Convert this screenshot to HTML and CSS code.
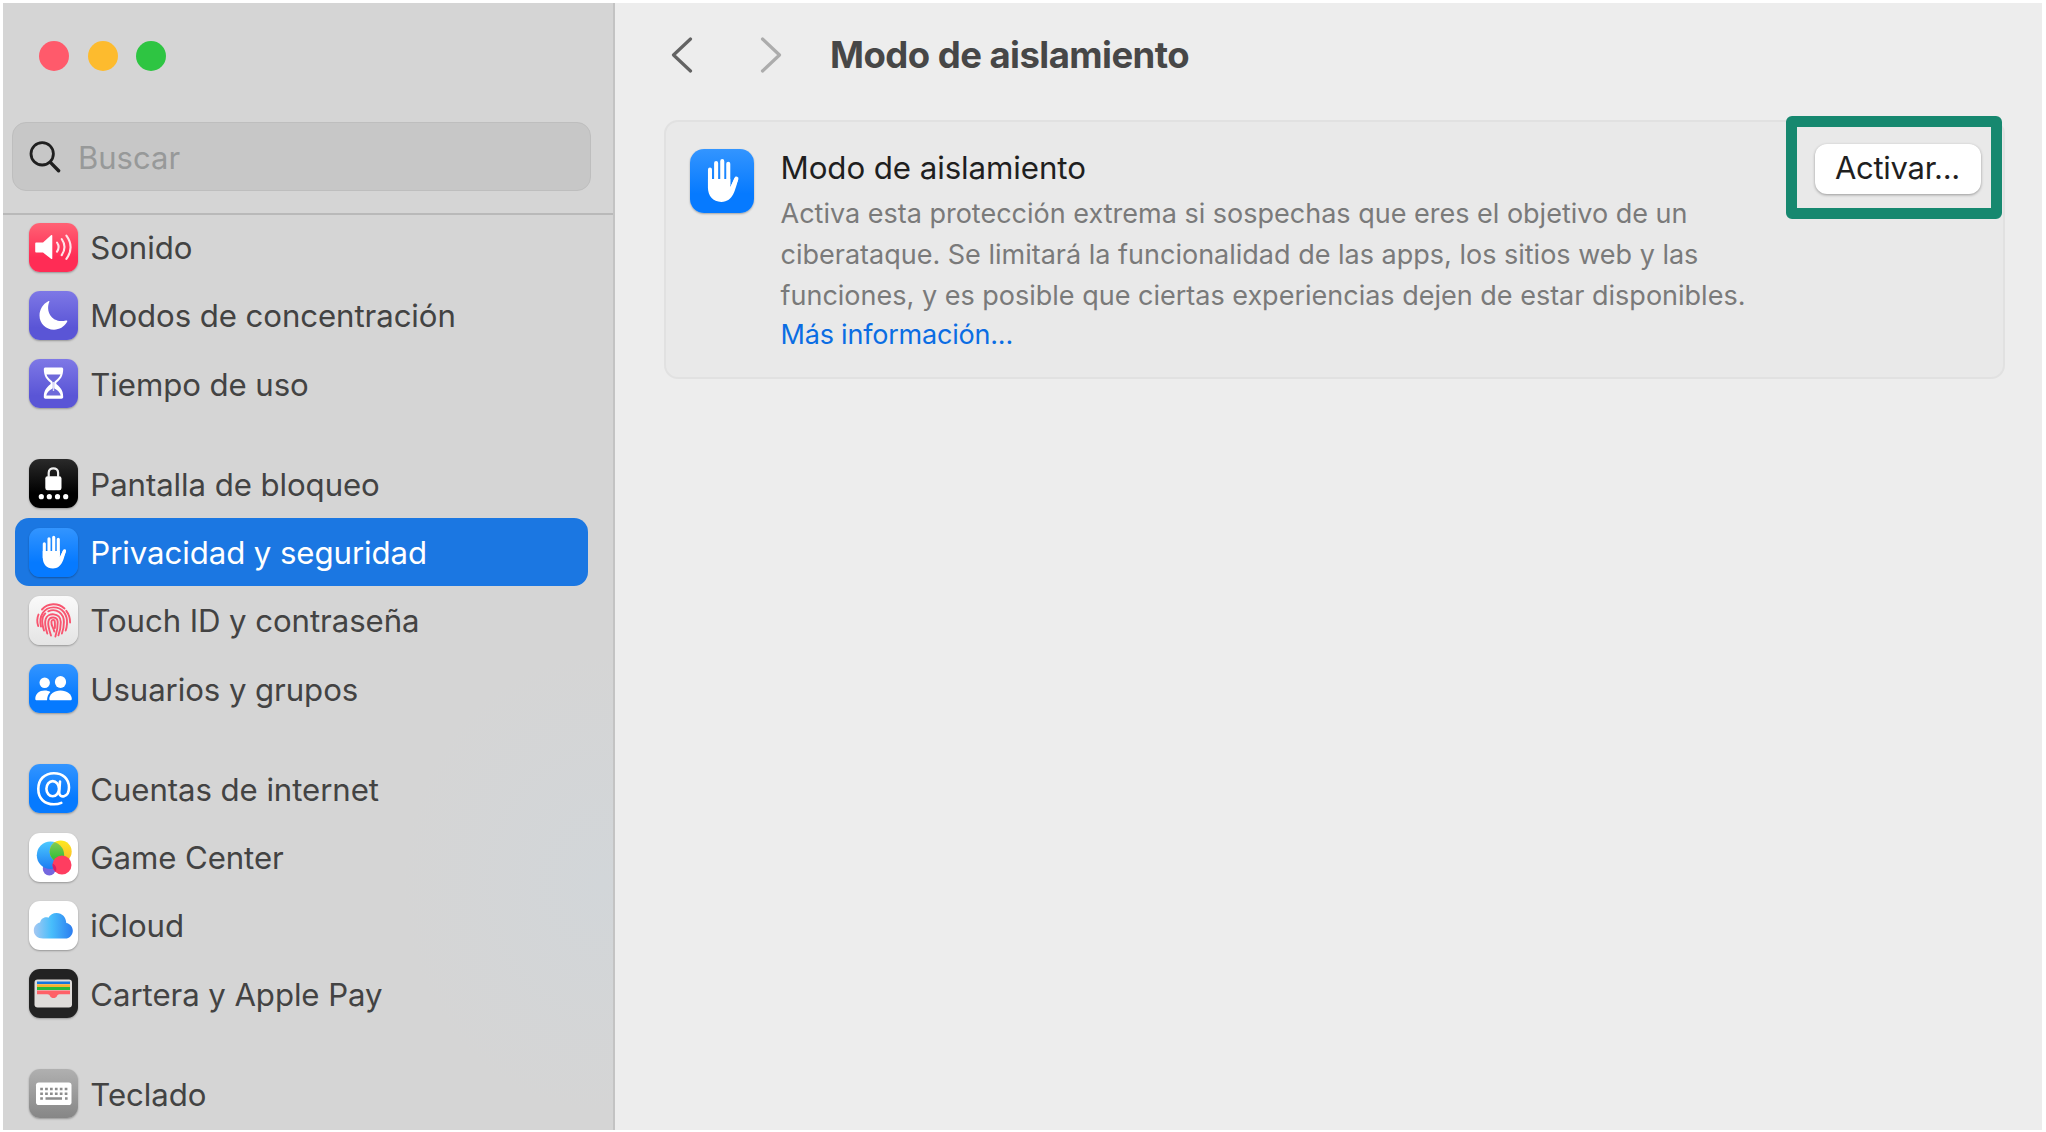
FILE: index.html
```html
<!DOCTYPE html>
<html lang="es">
<head>
<meta charset="utf-8">
<title>Modo de aislamiento</title>
<link rel="stylesheet" href="styles.css">
</head>
<body>
<svg class="defs" width="0" height="0" aria-hidden="true">
  <defs>
    <symbol id="hand" viewBox="0 0 49 49">
      <g fill="none" stroke="#fff" stroke-width="3.1" stroke-linecap="round">
        <path d="M15.300 15.800v14M20 10.800v16M24.700 9.300v17M29.300 11.300v16"/>
        <path d="M35.500 22.800l-3.400 8" stroke-width="3.200"/>
      </g>
      <path fill="#fff" d="M13.750 23H30.850V29L34.100 22.200 36.900 23.600C34.500 30.500 33.500 40.500 24 40.500 17.500 40.500 13.750 36 13.750 29.500Z"/>
    </symbol>
  </defs>
</svg>
<div class="window">
  <aside class="sidebar">
    <header class="sidebar-head">
      <div class="lights"><i class="light red"></i><i class="light amber"></i><i class="light green"></i></div>
      <div class="search">
        <svg width="32" height="32" viewBox="0 0 32 32" fill="none" stroke="#1f1f1f" stroke-width="2.800" stroke-linecap="round"><circle cx="13.200" cy="12.800" r="11.200"/><path d="M21.400 21.400L29.600 29.800" stroke-width="3.400"/></svg>
        <span>Buscar</span>
      </div>
    </header>
    <nav class="list">
      <div class="group">
        <div class="row"><svg class="icon sound" viewBox="0 0 49 49"><path fill="#fff" d="M7.500 19.500h6.500l8-7.300c.8-.6 1.300-.3 1.300.6v22.400c0 .9-.5 1.200-1.300.6l-8-6.300H7.500c-.9 0-1.300-.5-1.300-1.300v-7.400c0-.8.400-1.300 1.300-1.300z"/><g fill="none" stroke="#ffe3e8" stroke-width="2.100" stroke-linecap="round"><path d="M28 19.500q3.200 4.500 0 9.200M32.700 16q5.600 8 0 16.200M37.400 12.700q8.400 11.500 0 23.200"/></g></svg><span>Sonido</span></div>
        <div class="row"><svg class="icon violet" viewBox="0 0 49 49"><path fill="#fff" d="M20.300 10.800C16 21.500 24 32.700 36.800 29.600c1.400-.4 1.900.2 1.200 1.500C35 36 30.500 38.700 25 38.700 16.800 38.700 10.500 32.500 10.500 24.500c0-6 3.300-11.500 8.700-14.300.9-.5 1.500-.2 1.100.6z"/></svg><span>Modos de concentración</span></div>
        <div class="row"><svg class="icon violet" viewBox="0 0 49 49"><path fill="#fff" d="M16.500 8.500h16c1 0 1.700.6 1.700 1.500 0 7.500-3 10.500-6.300 13.300-.9.800-.9 1.500 0 2.300 3.300 2.800 6.300 5.900 6.300 12.400 0 1-.7 1.700-1.700 1.700h-16c-1 0-1.700-.7-1.700-1.700 0-6.500 3-9.600 6.300-12.400.9-.8.900-1.500 0-2.300C17.800 20.500 14.800 17.500 14.800 10c0-.9.700-1.500 1.700-1.500z"/><path fill="#6e69da" d="M17.500 15.500h14c-.9 2.500-2.500 4.300-5 6.200-1 .8-1.300 1.700-1.300 2.800v4c0 .8.400 1.200 1.100 1.600 2.800 1.600 4.800 3.500 5.400 6.400H17.300c.6-2.900 2.600-4.800 5.400-6.400.7-.4 1.100-.8 1.100-1.600v-4c0-1.100-.3-2-1.300-2.800-2.500-1.900-4.100-3.700-5-6.200z"/><path fill="#fff" d="M23.800 23h1.400v9h-1.400z" opacity=".75"/></svg><span>Tiempo de uso</span></div>
      </div>
      <div class="group">
        <div class="row"><svg class="icon black" viewBox="0 0 49 49"><rect x="16.300" y="17.300" width="16.200" height="14" rx="2.200" fill="#fff"/><path d="M19.700 18v-4.200c0-6 9.400-6 9.400 0V18" fill="none" stroke="#eee" stroke-width="2.200"/><g fill="#fff"><circle cx="12.300" cy="37.700" r="2.600"/><circle cx="20.300" cy="37.700" r="2.600"/><circle cx="28.500" cy="37.700" r="2.600"/><circle cx="36.700" cy="37.700" r="2.600"/></g></svg><span>Pantalla de bloqueo</span></div>
        <div class="row selected"><svg class="icon blue" viewBox="0 0 49 49"><use href="#hand"/></svg><span>Privacidad y seguridad</span></div>
        <div class="row"><svg class="icon paper" viewBox="0 0 49 49"><g fill="none" stroke="#f8556f" stroke-width="1.900" stroke-linecap="round"><path d="M13 13.500C19 6.800 29 6.600 35.500 12.500M37.300 14.800c2.500 3.200 3.800 7 3.800 11.700M9.500 18.500C8 22 7.800 26 9.200 30"/><path d="M12 30.500C9.500 20 15 11.500 24.500 11.400 33.500 11.400 38.700 18.500 38 28c-.2 2.800-.6 4.800-1.300 6.500"/><path d="M15 34.500C12.800 27 12 21.500 16.300 17.400M19.300 15.300C27 11.700 35 17 34.900 26c0 4-.6 8-2 11.500"/><path d="M18.300 37.500C16.500 32 15.300 27.500 16.600 23.200 18.500 16.300 31.700 16.200 31.800 26c0 4.500-.7 9-2.400 13.300"/><path d="M22 39.500C20.200 34 18.600 29.700 19.400 25.400 20.300 19.900 28.500 20.200 28.700 26c.1 4.800-.6 9.500-2.300 14.500"/><path d="M25.300 35.500C24.600 32 22 29.500 22.400 25.800c.3-2.700 3.300-2.500 3.400.2.100 2.300.3 4 .1 6"/></g></svg><span>Touch ID y contraseña</span></div>
        <div class="row"><svg class="icon blue" viewBox="0 0 49 49"><g fill="#fff"><circle cx="15.700" cy="18.700" r="5.200"/><path d="M6.300 34.800C6.300 30 10.200 26.500 15.700 26.500c2.300 0 4.200.5 5.700 1.500-2.300 2.200-3.300 5-3.300 8.300H7.800c-1 0-1.500-.5-1.500-1.500z"/><ellipse cx="31.500" cy="18" rx="5.600" ry="6"/><path d="M20.300 34.800C20.300 30.500 25 26.500 31.500 26.500S42.800 30.500 42.800 34.800c0 1-.5 1.500-1.500 1.500H21.800c-1 0-1.500-.5-1.500-1.500z"/></g></svg><span>Usuarios y grupos</span></div>
      </div>
      <div class="group">
        <div class="row"><svg class="icon blue" viewBox="0 0 49 49"><g fill="none" stroke="#fff" stroke-width="2.600" stroke-linecap="round"><ellipse cx="23.700" cy="24.700" rx="6.300" ry="7.600"/><path d="M31 17.500L30.200 28.500C30 34.500 40 34 40 23.500 40 14.500 33.500 9.200 25 9.200 15.500 9.200 9.300 15.500 9.300 25c0 9.500 6.200 15.300 15.700 15.300 2.600 0 5-.4 7.300-1.400"/></g></svg><span>Cuentas de internet</span></div>
        <div class="row"><svg class="icon white" viewBox="0 0 49 49"><defs><linearGradient id="gb" x2="0" y2="1"><stop stop-color="#4cc9ff"/><stop offset="1" stop-color="#1c7cf2"/></linearGradient><linearGradient id="gy" x2="0" y2="1"><stop stop-color="#fdea20"/><stop offset="1" stop-color="#fcb52c"/></linearGradient><linearGradient id="gg" x2="0" y2="1"><stop stop-color="#8bcb57"/><stop offset="1" stop-color="#22bd34"/></linearGradient><clipPath id="cb"><circle cx="21.500" cy="22.300" r="13.700"/></clipPath></defs><circle cx="20.300" cy="36" r="6.500" fill="#7467de"/><circle cx="21.500" cy="22.300" r="13.700" fill="url(#gb)"/><circle cx="31.700" cy="18.500" r="11" fill="url(#gy)"/><circle cx="31.700" cy="18.500" r="11" fill="url(#gg)" clip-path="url(#cb)"/><circle cx="33" cy="32" r="9.500" fill="#ff3d60"/><path d="M23.600 31.500a9.500 9.500 0 0 0 3.300 7.500 6.500 6.500 0 0 0-3.300-8.500z" fill="#d61e68"/></svg><span>Game Center</span></div>
        <div class="row"><svg class="icon white" viewBox="0 0 49 49"><defs><linearGradient id="cl"><stop stop-color="#a6c8f2"/><stop offset=".45" stop-color="#48befb"/><stop offset="1" stop-color="#2c7df0"/></linearGradient></defs><path fill="url(#cl)" d="M14 37.500C8.500 37.500 4.800 34 4.800 29.500c0-4.200 2.600-7.400 6.300-8 .6-3.500 4.400-6.300 8.300-4.700C21.200 13.700 24 12 27.500 12c5.700 0 9.500 4.200 9.800 10 3.700.7 6.500 3.700 6.500 7.700 0 4.300-3.300 7.800-7.500 7.800z"/></svg><span>iCloud</span></div>
        <div class="row"><svg class="icon wallet" viewBox="0 0 49 49"><rect x="5.500" y="10.500" width="37.500" height="28" rx="3.200" fill="#dfdcda"/><path fill="#1476dc" d="M8 12.500h33v2.400H8z"/><path fill="#f8b12c" d="M8 15.300h33v2.800H8z"/><path fill="#27b83b" d="M8 18.100h33v3H8z"/><path fill="#ff6167" d="M8 21.500h33v3.700H30.500c-1.500 0-2 .7-2.500 1.800-1.300 2.700-5.700 2.700-7 0-.5-1.100-1-1.800-2.500-1.800H8z"/></svg><span>Cartera y Apple Pay</span></div>
      </div>
      <div class="group">
        <div class="row"><svg class="icon gray" viewBox="0 0 49 49"><rect x="7" y="13.500" width="35.500" height="22.500" rx="2.800" fill="#fff"/><g stroke="#8c8c8c" stroke-width="2.600" fill="none"><path d="M11.200 20h27.500M11.200 24.800h27.500" stroke-dasharray="2.700 2.200"/><path d="M11.200 29.500h2.700M16.500 29.500h16.500M36 29.500h2.600"/></g></svg><span>Teclado</span></div>
      </div>
    </nav>
  </aside>
  <main class="main">
    <header class="toolbar">
      <svg class="chev back" width="22" height="36" viewBox="0 0 22 36"><path d="M19.500 2L2.500 18l17 16"/></svg>
      <svg class="chev next" width="22" height="36" viewBox="0 0 22 36"><path d="M2.500 2l17 16L2.500 34"/></svg>
      <h1>Modo de aislamiento</h1>
    </header>
    <section class="card">
      <svg class="icon big blue" viewBox="0 0 49 49"><use href="#hand"/></svg>
      <div class="copy">
        <h2>Modo de aislamiento</h2>
        <p>Activa esta protección extrema si sospechas que eres el objetivo de un<br>ciberataque. Se limitará la funcionalidad de las apps, los sitios web y las<br>funciones, y es posible que ciertas experiencias dejen de estar disponibles.</p>
        <a>Más información...</a>
      </div>
      <div class="highlight"><button>Activar...</button></div>
    </section>
  </main>
</div>
</body>
</html>
```
FILE: styles.css
```css
* { box-sizing: border-box; }
body { margin: 0; width: 2046px; height: 1132px; padding: 3px 4px 2px 3px; overflow: hidden; background: #fff; font-family: Inter, "Liberation Sans", sans-serif; }
.defs { display: block; position: absolute; }
.window { display: flex; width: 2039px; height: 1127px; overflow: hidden; background: #ededed; }
.sidebar { flex: none; width: 612px; border-right: 2px solid #c3c3c3; background: radial-gradient(ellipse 200px 230px at 600px 880px, #d2d6d9 0%, #d5d5d5 100%); }
.sidebar-head { height: 212px; padding: 38px 22px 0 9px; border-bottom: 2px solid #b9b9b9; }
.lights { display: flex; gap: 18.700px; padding-left: 27px; height: 81px; }
.light { width: 30px; height: 30px; border-radius: 50%; }
.red { background: #ff5a6b; }
.amber { background: #fdbb2e; }
.green { background: #2ec542; }
.search { display: flex; align-items: center; gap: 17.500px; height: 69px; padding-left: 15.500px; border: 1px solid #bebebe; border-radius: 14px; background: #c7c7c7; color: #979999; font-size: 31px; }
.search span { padding-top: 2px; }
.list { margin-top: -2px; color: #434343; font-size: 31.200px; letter-spacing: -0.080px; }
.group { margin-bottom: 31.700px; }
.row { display: flex; align-items: center; gap: 12px; height: 68.330px; margin: 0 25px 0 12px; padding-left: 14.300px; border-radius: 14px; white-space: nowrap; }
.row span { padding-top: 2px; }
.selected { background: #1b77e2; color: #fff; }
.icon { flex: none; width: 49px; height: 49px; border-radius: 11px; box-shadow: 0 1px 2px rgba(0,0,0,.3); }
.sound { background: linear-gradient(#ff6274, #ff2c55 70%); }
.violet { background: linear-gradient(#7e78e6, #5a55d6 75%); }
.black { background: linear-gradient(#2a2a2a, #000 70%); }
.blue { background: linear-gradient(#3395ff, #067aff 70%); }
.paper { background: linear-gradient(#fafafa, #e4e4e4); }
.white { background: #fff; }
.wallet { background: #222; }
.gray { background: linear-gradient(#b0b0b0, #868686); }
.main { flex: 1; padding: 0 37px 0 49px; }
.toolbar { display: flex; align-items: center; height: 117px; padding: 0 0 13px 7px; }
.chev { fill: none; stroke: #636363; stroke-width: 3.200; stroke-linecap: round; stroke-linejoin: round; }
.next { stroke: #acacac; margin-left: 67px; }
h1 { margin: 0 0 0 48px; color: #474747; font-size: 36.500px; font-weight: 700; line-height: 44px; letter-spacing: -0.550px; }
.card { display: flex; height: 259px; padding: 0 1px 0 24px; border: 2px solid #e1e1e1; border-radius: 14px; background: #e9e9e9; }
.big { width: 64px; height: 64px; margin-top: 27px; border-radius: 14px; }
.copy { flex: 1; padding: 23.500px 0 0 26.500px; }
h2 { margin: 0; color: #1f1f1f; font-size: 31.300px; font-weight: 400; line-height: 44px; letter-spacing: -0.100px; }
p { margin: 3px 0 0; color: #7a7a7a; font-size: 27px; line-height: 41.300px; }
a { display: block; color: #0b6de3; font-size: 27px; line-height: 37px; letter-spacing: -0.200px; }
.highlight { width: 216px; height: 103px; margin-top: -6.500px; border: 11px solid #16886f; border-radius: 6px; padding: 17px 17.500px; }
button { display: block; width: 166px; height: 50px; border: 0; border-radius: 12px; padding: 0 0 3px; background: #fff; box-shadow: 0 1px 3px rgba(0,0,0,.35); color: #1f1f1f; font: 31px Inter, sans-serif; letter-spacing: -0.300px; }
```
